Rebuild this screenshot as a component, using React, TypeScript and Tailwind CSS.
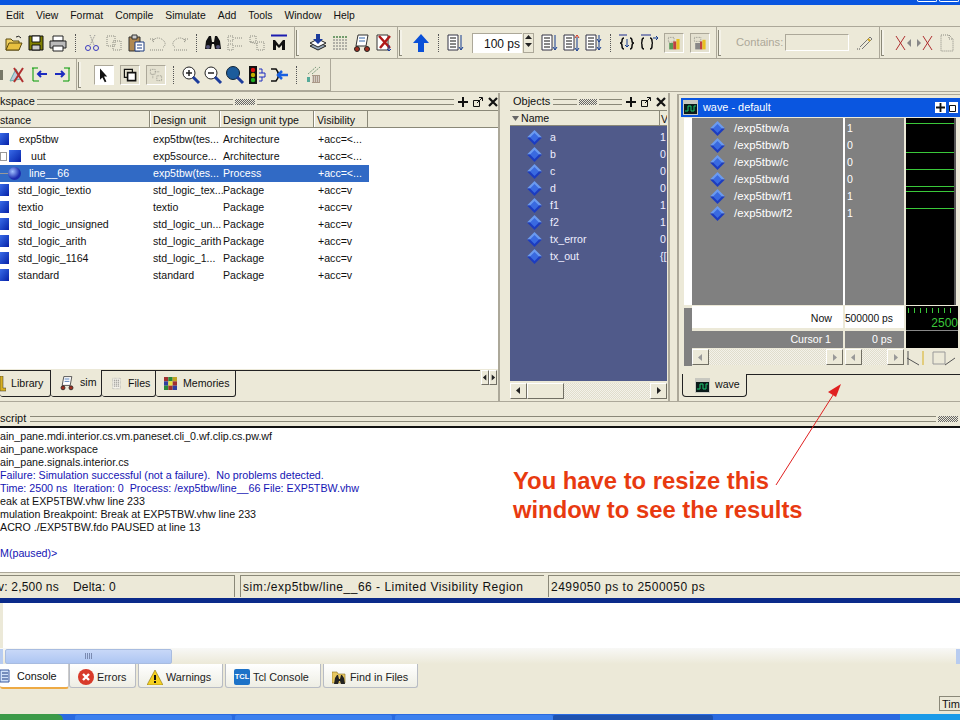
import React from "react";

const Ic = ({ children, s = 20 }: { children: React.ReactNode; s?: number }) => (
  <svg width={s} height={s} viewBox="0 0 20 20" className="block shrink-0">{children}</svg>
);
const dis = { fill: "none", stroke: "#8a8a80", strokeWidth: 1, strokeDasharray: "1 1" };

const icons: Record<string, React.ReactNode> = {
  open: <><path d="M2 6h5l2 2h6v9H2z" fill="#f0d060" stroke="#5a4a10" /><path d="M5 10h13l-3 7H2z" fill="#e8c040" stroke="#5a4a10" /><path d="M12 4q3-2 5 1" fill="none" stroke="#222" /></>,
  save: <><path d="M3 3h14v14H3z" fill="#808000" stroke="#111" /><path d="M6 3h8v6H6z" fill="#fff" stroke="#111" /><path d="M6 12h8v5H6z" fill="#ccc" stroke="#111" /></>,
  print: <><path d="M5 3h10v5H5z" fill="#fff" stroke="#222" /><path d="M2 8h16v7H2z" fill="#bbb" stroke="#222" /><path d="M5 13h10v5H5z" fill="#fff" stroke="#222" /></>,
  cut: <><path d="M8 2l4 10M13 2l-5 10" stroke="#888" fill="none" strokeDasharray="1 1" /><circle cx="6" cy="15" r="2.5" fill="none" stroke="#3a3ac0" /><circle cx="14" cy="15" r="2.5" fill="none" stroke="#3a3ac0" /></>,
  copy: <><path d="M3 3h8v10H3z" {...dis} /><path d="M9 8h8v9H9z" {...dis} /></>,
  paste: <><path d="M3 4h11v14H3z" fill="#b08850" stroke="#333" /><path d="M6 2h5v4H6z" fill="#ccc" stroke="#333" /><path d="M9 9h9v9H9z" fill="#fff" stroke="#1a3a80" /><path d="M11 12h5M11 15h5" stroke="#1a3a80" /></>,
  undo: <><path d="M4 8q6-6 12 0 3 4-2 7" {...dis} /><path d="M2 6l4 0-1 4M2 17h14" {...dis} /></>,
  redo: <><path d="M16 8q-6-6-12 0-3 4 2 7" {...dis} /><path d="M18 6l-4 0 1 4M4 17h14" {...dis} /></>,
  bino: <><path d="M3 8l3-5h2l1 6h2l1-6h2l3 5 1 8h-6l-1-5h-2l-1 5H2z" fill="#111" /><circle cx="5" cy="14" r="2" fill="#557" /><circle cx="15" cy="14" r="2" fill="#557" /></>,
  findA: <><path d="M3 3h5v5H3zM3 11h5v6H3zM10 5h7M10 13h7" {...dis} /></>,
  findB: <><path d="M3 3h6v6H3zM10 9h7v8h-7z" {...dis} /><path d="M3 9l7 2" {...dis} /></>,
  M: <><path d="M2 2.500h16" stroke="#1c1cb0" strokeWidth="2" /><path d="M4 17V7h2l4 5 4-5h2v10h-3v-5l-3 3-3-3v5z" fill="#111" /></>,
  stack: <><path d="M10 9l8 4-8 4-8-4z" fill="#9ab" stroke="#222" /><path d="M10 6l8 4-8 4-8-4z" fill="#fff" stroke="#222" /><path d="M8 1h4v5h3l-5 5-5-5h3z" fill="#1c3c9c" /></>,
  grid: <><path d="M3 4h14M3 7h14M3 10h14M3 13h14M3 16h14" stroke="#777" strokeDasharray="2 1" /><path d="M3 4h14" stroke="#383" strokeDasharray="2 1" /></>,
  cart: <><path d="M6 2h10l-2 11H4z" fill="#fff" stroke="#333" /><path d="M7 5h6M7 8h6" stroke="#36a" /><circle cx="5" cy="16" r="2.500" fill="#a03020" stroke="#222" /><circle cx="15" cy="16" r="2.500" fill="#a03020" stroke="#222" /></>,
  docx: <><path d="M3 2h11v15H3z" fill="#fff" stroke="#333" /><path d="M5 3l11 12M16 3L6 15" stroke="#b01818" strokeWidth="2.500" /><path d="M15 12v6m-2-2l2 2 2-2" stroke="#1c3c9c" fill="none" /></>,
  up: <path d="M10 1l8 9h-5v9H7v-9H2z" fill="#0a50d8" />,
  lst1: <><path d="M2 2h10v15H2z" fill="#fff" stroke="#334" /><path d="M4 5h6M4 8h6M4 11h6M4 14h6" stroke="#111" /><path d="M15 2v14M13 14l2 3 2-3" stroke="#123a90" fill="none" /></>,
  lst2: <><path d="M2 2h10v15H2z" fill="#fff" stroke="#334" /><path d="M4 5h6M4 8h6M4 11h6M4 14h6" stroke="#111" /><path d="M15 4v13" stroke="#123a90" /><path d="M13 5l2-3 2 3" stroke="#d03020" fill="none" /><path d="M13 15l2 3 2-3" stroke="#123a90" fill="none" /></>,
  lst3: <><path d="M2 2h10v15H2z" fill="#fff" stroke="#334" /><path d="M4 5h6M4 8h6M4 11h6M4 14h6" stroke="#111" /><path d="M15 2v15M13 6l2 3 2-3M13 14l2 3 2-3" stroke="#123a90" fill="none" /></>,
  braceA: <><path d="M2 2h8" stroke="#1c2c90" /><path d="M7 5q-2 0-2 3 0 2-2 2 2 0 2 3 0 3 2 3M13 5q2 0 2 3 0 2 2 2-2 0-2 3 0 3-2 3" fill="none" stroke="#111" strokeWidth="1.500" /><path d="M10 6v8M8 12l2 2 2-2" stroke="#123a90" fill="none" /></>,
  braceB: <><path d="M2 2h10" stroke="#1c2c90" /><path d="M5 5q-2 0-2 3 0 2-1 2 1 0 1 3 0 3 2 3M11 5q2 0 2 3 0 2 1 2-1 0-1 3 0 3-2 3" fill="none" stroke="#111" strokeWidth="1.500" /><path d="M14 5h5M17 3l2 2-2 2" stroke="#123a90" fill="none" /></>,
  chartA: <><path d="M3 3h7v6H3z" {...dis} /><path d="M4 10h5v8H4z" fill="#5a9a5a" /><path d="M9 8h4v10H9z" fill="#c04040" /><path d="M13 5h4v13h-4z" fill="#e8c020" /></>,
  chartB: <><path d="M3 3h8v5H3z" {...dis} /><path d="M4 10h6v8H4z" fill="#888" /><path d="M10 8h3v10h-3z" fill="#c04040" /><path d="M13 6h4v12h-4z" fill="#e8c020" /></>,
  xl: <><path d="M3 3l9 14M12 3L3 17" stroke="#b03030" /><path d="M18 6l-4 4 4 4z" fill="#888" /></>,
  xr: <><path d="M8 3l9 14M17 3L8 17" stroke="#b03030" /><path d="M2 6l4 4-4 4z" fill="#888" /></>,
  page: <path d="M4 2h8l4 4v12H4zM12 2v4h4" {...dis} />,
  files: <><path d="M4 2h12v16H4z" fill="#f4f2ea" stroke="#999" strokeDasharray="1 1" /><path d="M6 5h8M6 8h8M6 11h8M6 14h8" stroke="#555" strokeDasharray="2 1" /></>,
  pen: <><path d="M5 14L15 4l2 2L7 16" fill="none" stroke="#777" /><path d="M2 16h4" stroke="#555" strokeDasharray="1 1" /><path d="M13 6l2 2" stroke="#dcae20" strokeWidth="2" /></>,
  cart2: <><path d="M2 16L8 4l5 10z" fill="#bcd" stroke="#6aa" /><path d="M6 3l9 14M15 3L6 17" stroke="#b03030" strokeWidth="2" /></>,
  bl: <><path d="M2 3h6M3 3v13h6" fill="none" stroke="#090" /><path d="M17 9H8M11 6L8 9l3 3" fill="none" stroke="#1c2cc0" strokeWidth="2" /></>,
  br: <><path d="M18 3h-6M17 3v13h-6" fill="none" stroke="#090" /><path d="M3 9h9M9 6l3 3-3 3" fill="none" stroke="#1c2cc0" strokeWidth="2" /></>,
  arrow: <path d="M5 2v14l3-3 3 6 2-1-3-6h4z" fill="#111" />,
  box: <><path d="M3 3h10v10H3z" fill="none" stroke="#111" strokeWidth="1.500" /><path d="M7 7h10v10H7z" fill="#fff" stroke="#111" strokeWidth="2" /></>,
  box2: <path d="M3 3h6v6H3zM11 11h6v6h-6zM9 6h6M6 9v6" {...dis} />,
  zin: <><circle cx="8" cy="8" r="6" fill="#fff" stroke="#222" /><path d="M5 8h6M8 5v6" stroke="#222" strokeWidth="1.500" /><path d="M12 12l6 6" stroke="#1c3c9c" strokeWidth="3" /></>,
  zout: <><circle cx="8" cy="8" r="6" fill="#fff" stroke="#222" /><path d="M5 8h6" stroke="#222" strokeWidth="1.500" /><path d="M12 12l6 6" stroke="#1c3c9c" strokeWidth="3" /></>,
  zfull: <><circle cx="8" cy="8" r="6.500" fill="#1c5c9c" stroke="#123" /><path d="M12 12l6 6" stroke="#1c3c9c" strokeWidth="3" /></>,
  light: <><path d="M2 1h8v18H2z" fill="#111" /><circle cx="6" cy="5" r="2.200" fill="#e01010" /><circle cx="6" cy="10" r="2.200" fill="#c0b000" /><circle cx="6" cy="15" r="2.200" fill="#20b020" /><path d="M12 4h3v4h-3M12 16h3v-4h-3M15 8h3v4h-3" fill="none" stroke="#1c2cc0" /></>,
  arrowIn: <><path d="M2 4h5q5 6 0 12H2" fill="none" stroke="#111" strokeWidth="1.600" /><path d="M19 10H9M13 6l-4 4 4 4" fill="none" stroke="#1860e0" strokeWidth="2.500" /></>,
  multi: <><path d="M4 9l8-7M8 9l8-7" stroke="#7a9a7a" strokeDasharray="2 1" /><path d="M3 12h3v5H3z" fill="#5a9" /><path d="M8 10h8v8H8z" fill="#a98" /><path d="M8 12h8M8 14h8M8 16h8" stroke="#fff" strokeDasharray="1 1" /></>,
};

const Tool = ({ n, cls = "" }: { n: string; cls?: string }) => (
  <div className={`w-[22px] h-[22px] flex items-center justify-center shrink-0 ${cls}`}><Ic>{icons[n]}</Ic></div>
);
const Btn = ({ n, white = false }: { n: string; white?: boolean }) => (
  <div className={`w-[20px] h-[20px] flex items-center justify-center shrink-0 border border-t-[#aca899] border-l-[#aca899] border-r-white border-b-white ${white ? "bg-white" : "bg-[#e4e1d0]"}`}><Ic s={16}>{icons[n]}</Ic></div>
);
const Sep = ({ w = "w-[12px]" }: { w?: string }) => (
  <div className={`${w} h-[18px] shrink-0 flex justify-center`}><div className="w-px h-full border-l border-dotted border-[#555]" /></div>
);
const Handle = () => (
  <div className="w-[12px] h-[26px] shrink-0 pl-[1px]"><div className="w-[3px] h-full border-l border-b border-[#8a8878] bg-[#f4f2e8]" /></div>
);
const Group = ({ w, children }: { w: string; children: React.ReactNode }) => (
  <div className={`${w} h-full flex items-center shrink-0 border-r border-[#aca899]`}>{children}</div>
);

const Grip = () => <div className="flex-1 h-[6px] border-y border-[#8a8878] min-w-0" />;
const Dots = ({ w = "w-[20px]" }: { w?: string }) => (
  <div className={`${w} h-[6px] shrink-0 mx-[2px] bg-[repeating-conic-gradient(#666_0_25%,transparent_0_50%)] bg-[length:2px_2px]`} />
);
const WinBtns = () => (
  <div className="flex items-center gap-[5px] shrink-0 ml-[4px]">
    <svg width="10" height="10" viewBox="0 0 10 10"><path d="M4 0h2v4h4v2H6v4H4V6H0V4h4z" fill="#111" /></svg>
    <svg width="10" height="10" viewBox="0 0 10 10"><path d="M.5 3.500h6v6h-6z" fill="none" stroke="#111" /><path d="M4 6l5-5M6 .5h3.500V4" fill="none" stroke="#111" /></svg>
    <svg width="10" height="10" viewBox="0 0 10 10"><path d="M1 1l8 8M9 1l-8 8" stroke="#111" strokeWidth="2.200" /></svg>
  </div>
);
const Cube = () => <div className="w-[12px] h-[12px] shrink-0 bg-gradient-to-br from-[#3a6ae8] to-[#0a1ea8]" />;
const Diamond = () => (
  <svg width="15" height="15" viewBox="0 0 15 15" className="shrink-0">
    <path d="M7.500 0L15 7.500H0z" fill="#6a9af0" />
    <path d="M0 7.500h15L7.500 15z" fill="#1c3cc0" />
    <path d="M7.500 3l4.500 4.500L7.500 12 3 7.500z" fill="#3a6ae0" />
  </svg>
);
const WaveIcon = () => (
  <svg width="15" height="15" viewBox="0 0 15 15" className="shrink-0">
    <path d="M0 0h15v15H0z" fill="#c8c8c0" />
    <path d="M1 4h13v10H1z" fill="#0a1a1a" />
    <path d="M2 11h3V6h3v5h3V6h2" stroke="#1ac870" fill="none" />
  </svg>
);
const Arr = ({ d, c = "#222" }: { d: "l" | "r" | "u" | "d"; c?: string }) => (
  <svg width="7" height="7" viewBox="0 0 7 7">
    <path d={d === "l" ? "M5 0v7L1 3.500z" : d === "r" ? "M2 0v7l4-3.500z" : d === "u" ? "M0 5h7L3.500 1z" : "M0 2h7L3.500 6z"} fill={c} />
  </svg>
);
const SbBtn = ({ d, c }: { d: "l" | "r"; c?: string }) => (
  <div className="w-[17px] h-[16px] shrink-0 bg-[#ece9d8] border border-white border-r-[#716f64] border-b-[#716f64] flex items-center justify-center"><Arr d={d} c={c} /></div>
);
const Dither = "bg-[repeating-conic-gradient(#f4f2ea_0_25%,#e0ddcc_0_50%)] bg-[length:2px_2px]";

const tree = [
  ["exp5tbw", "exp5tbw(tes...", "Architecture", "+acc=<..."],
  ["uut", "exp5source...", "Architecture", "+acc=<..."],
  ["line__66", "exp5tbw(tes...", "Process", "+acc=<..."],
  ["std_logic_textio", "std_logic_tex...", "Package", "+acc=v"],
  ["textio", "textio", "Package", "+acc=v"],
  ["std_logic_unsigned", "std_logic_un...", "Package", "+acc=v"],
  ["std_logic_arith", "std_logic_arith", "Package", "+acc=v"],
  ["std_logic_1164", "std_logic_1...", "Package", "+acc=v"],
  ["standard", "standard", "Package", "+acc=v"],
];
const objs = [["a", "1"], ["b", "0"], ["c", "0"], ["d", "0"], ["f1", "1"], ["f2", "1"], ["tx_error", "0"], ["tx_out", "{["]];
const waves = [["/exp5tbw/a", "1"], ["/exp5tbw/b", "0"], ["/exp5tbw/c", "0"], ["/exp5tbw/d", "0"], ["/exp5tbw/f1", "1"], ["/exp5tbw/f2", "1"]];
const logLines: [string, string][] = [
  ["ain_pane.mdi.interior.cs.vm.paneset.cli_0.wf.clip.cs.pw.wf", "text-[#111]"],
  ["ain_pane.workspace", "text-[#111]"],
  ["ain_pane.signals.interior.cs", "text-[#111]"],
  ["Failure: Simulation successful (not a failure).  No problems detected.", "text-[#1414b4]"],
  ["Time: 2500 ns  Iteration: 0  Process: /exp5tbw/line__66 File: EXP5TBW.vhw", "text-[#1414b4]"],
  ["eak at EXP5TBW.vhw line 233", "text-[#111]"],
  ["mulation Breakpoint: Break at EXP5TBW.vhw line 233", "text-[#111]"],
  ["ACRO ./EXP5TBW.fdo PAUSED at line 13", "text-[#111]"],
  ["\u00a0", "text-[#111]"],
  ["M(paused)>", "text-[#1414b4]"],
];

const HeadCell = ({ w, children }: { w: string; children?: React.ReactNode }) => (
  <div className={`${w} h-full shrink-0 flex items-center pl-[2px] pt-[3px] border-r border-[#8a8878] border-l border-l-white overflow-hidden whitespace-nowrap`}>{children}</div>
);

const BotTab = ({ w, icon, label }: { w: string; icon: React.ReactNode; label: string }) => (
  <div className={`${w} h-[24px] shrink-0 flex items-center gap-[3px] pl-[8px] pt-[3px] rounded-b-[3px] border-x border-b border-[#b8bcc4] bg-gradient-to-b from-white to-[#eeeee4]`}>
    {icon}<span className="text-[#222]">{label}</span>
  </div>
);

export default function App() {
  return (
    <div className="w-[960px] h-[720px] relative overflow-hidden flex flex-col bg-[#ece9d8] text-[10.6px] text-[#111] font-['Liberation_Sans',Arial,sans-serif]">
      {/* title strip */}
      <div className="h-[5px] shrink-0 bg-[#0a56e0] flex justify-end items-start pr-[1px] gap-[2px]">
        <div className="w-[20px] h-[2px] border-x border-b border-white rounded-b-[2px]" />
        <div className="w-[20px] h-[2px] border-x border-b border-white rounded-b-[2px]" />
      </div>
      {/* menu */}
      <div className="h-[21px] shrink-0 flex items-center pl-[6px] gap-[12px] text-[10.4px]">
        {["Edit", "View", "Format", "Compile", "Simulate", "Add", "Tools", "Window", "Help"].map((m) => <span key={m}>{m}</span>)}
      </div>
      {/* toolbar 1 */}
      <div className="h-[33px] shrink-0 flex items-center border-y border-[#aca899]">
        <Group w="w-[295px]">
          <div className="w-[3px]" />
          <Tool n="open" /><Tool n="save" /><Tool n="print" /><Sep />
          <Tool n="cut" /><Tool n="copy" /><Tool n="paste" /><Tool n="undo" /><Tool n="redo" /><Sep w="w-[11px]" />
          <Tool n="bino" /><Tool n="findA" /><Tool n="findB" /><Tool n="M" />
        </Group>
        <Group w="w-[103px]">
          <Handle />
          <Tool n="stack" /><Tool n="grid" /><Tool n="cart" /><Tool n="docx" />
        </Group>
        <Group w="w-[319px]">
          <Handle />
          <Tool n="up" /><Sep w="w-[13px]" />
          <Tool n="lst1" />
          <div className="w-[50px] h-[20px] ml-[5px] bg-white shrink-0 text-right pr-[2px] text-[12px] leading-[20px] border-t border-l border-[#aca899]">100 ps</div>
          <div className="w-[11px] h-[20px] ml-[1px] shrink-0 flex flex-col items-center border border-[#aca899]"><Arr d="u" /><Arr d="d" /></div>
          <div className="w-[5px]" />
          <Tool n="lst1" /><Tool n="lst2" /><Tool n="lst3" /><Sep w="w-[11px]" />
          <Tool n="braceA" /><Tool n="braceB" />
          <div className="w-[4px]" />
          <Btn n="chartA" /><div className="w-[6px]" /><Btn n="chartB" />
        </Group>
        <Group w="w-[163px]">
          <Handle />
          <span className="text-[#aca899] text-[11.2px] ml-[7px] w-[49px]">Contains:</span>
          <div className="w-[64px] h-[17px] border border-[#aca899] border-r-white border-b-white shrink-0" />
          <Tool n="pen" cls="ml-[5px]" />
        </Group>
        <Handle />
        <div className="flex items-center"><Tool n="xl" /><Tool n="xr" /><Tool n="page" /></div>
      </div>
      {/* toolbar 2 */}
      <div className="h-[32px] shrink-0 flex items-center">
        <div className="w-[331px] h-full flex items-center border-b border-r border-[#aca899] shrink-0">
          <div className="w-[77px] h-full flex items-center border-r border-[#aca899] shrink-0 overflow-hidden">
            <div className="w-[3px] h-[10px] bg-[#776] shrink-0" /><div className="w-[4px]" />
            <Tool n="cart2" /><Tool n="bl" /><Tool n="br" />
          </div>
          <Handle />
          <div className="w-[5px]" />
          <Btn n="arrow" white /><div className="w-[6px]" /><Btn n="box" /><div className="w-[6px]" /><Btn n="box2" />
          <Sep w="w-[14px]" />
          <Tool n="zin" /><Tool n="zout" /><Tool n="zfull" /><Tool n="light" /><Tool n="arrowIn" /><Sep w="w-[13px]" />
          <Tool n="multi" />
        </div>
      </div>
      {/* panes */}
      <div className="h-[310px] shrink-0 flex border-t border-[#aca899] pt-[1px]">
        {/* workspace */}
        <div className="w-[500px] shrink-0 flex flex-col border-r-2 border-[#aca899]">
          <div className="h-[17px] shrink-0 flex items-center text-[11px]">
            <span className="mr-[2px]">kspace</span><Grip /><Dots /><Grip /><WinBtns />
          </div>
          <div className="h-[18px] shrink-0 flex border-y border-[#8a8878]">
            <div className="w-[150px] h-full shrink-0 flex items-center pt-[3px] border-r border-[#8a8878]">stance</div>
            <HeadCell w="w-[70px]">Design unit</HeadCell>
            <HeadCell w="w-[94px]">Design unit type</HeadCell>
            <HeadCell w="w-[54px]">Visibility</HeadCell>
          </div>
          <div className="h-[241px] shrink-0 bg-white pt-[3px]">
            {tree.map((r, i) => {
              const sel = i === 2;
              return (
                <div key={r[0]} className={`h-[17px] w-[369px] flex items-center whitespace-nowrap overflow-hidden ${sel ? "bg-[#316ac5] text-white" : ""}`}>
                  <div className="w-[150px] shrink-0 flex items-center overflow-hidden">
                    {i === 1 ? (
                      <><div className="w-[7px] h-[9px] border border-[#999] bg-white shrink-0" /><div className="w-[2px]" /><Cube /><span className="ml-[10px]">{r[0]}</span></>
                    ) : sel ? (
                      <><div className="w-[8px] h-px bg-[#999] shrink-0" /><div className="w-[13px] h-[13px] rounded-full shrink-0 bg-[radial-gradient(circle_at_35%_35%,#a0c0ff,#1c2cb0_60%)]" /><span className="ml-[8px]">{r[0]}</span></>
                    ) : (
                      <><div className="w-[9px] h-[12px] shrink-0 bg-gradient-to-br from-[#3a6ae8] to-[#0a1ea8]" /><span className={i === 0 ? "ml-[10px]" : "ml-[9px]"}>{r[0]}</span></>
                    )}
                  </div>
                  <div className="w-[71px] pl-[3px] shrink-0">{r[1]}</div>
                  <div className="w-[95px] pl-[2px] shrink-0">{r[2]}</div>
                  <div className="pl-[2px]">{r[3]}</div>
                </div>
              );
            })}
          </div>
          <div className="flex-1 flex items-start pt-[1px] relative">
            <div className="flex h-[27px] items-stretch">
              <div className="w-[51px] shrink-0 flex items-center gap-[5px] border-r border-b border-t border-[#222] rounded-b-[3px]">
                <svg width="6" height="16" viewBox="0 0 6 16"><path d="M0 0h3v12h3v3H0z" fill="#d8b020" stroke="#333" strokeWidth=".5" /></svg><span>Library</span>
              </div>
              <div className="w-[51px] shrink-0 flex items-center gap-[5px] pl-[8px] border-r border-b border-[#222] rounded-b-[3px]">
                <Ic s={16}>{icons.cart}</Ic><span>sim</span>
              </div>
              <div className="w-[54px] shrink-0 flex items-center gap-[5px] pl-[8px] border-r border-b border-t border-[#222] rounded-b-[3px]">
                <Ic s={13}>{icons.files}</Ic><span>Files</span>
              </div>
              <div className="w-[80px] shrink-0 flex items-center gap-[6px] pl-[8px] border-r border-b border-t border-[#222] rounded-b-[3px]">
                <svg width="13" height="13" viewBox="0 0 12 12"><path d="M0 0h4v4H0z" fill="#a03030" /><path d="M4 0h4v4H4z" fill="#2a8a3a" /><path d="M8 0h4v4H8z" fill="#c0a020" /><path d="M0 4h4v4H0z" fill="#3040a0" /><path d="M4 4h4v4H4z" fill="#e8e040" /><path d="M8 4h4v4H8z" fill="#a03030" /><path d="M0 8h4v4H0z" fill="#2a8a3a" /><path d="M4 8h4v4H4z" fill="#a03030" /><path d="M8 8h4v4H8z" fill="#3040a0" /></svg>
                <span>Memories</span>
              </div>
            </div>
            <div className="flex-1 h-px bg-[#222] mr-[18px]" />
            <div className="flex items-center absolute right-[1px] top-[1px]">
              <div className="w-[8px] h-[15px] bg-[#ece9d8] border border-white border-r-[#716f64] border-b-[#716f64] flex items-center justify-center"><Arr d="l" /></div>
              <div className="w-[8px] h-[15px] bg-[#ece9d8] border border-white border-r-[#716f64] border-b-[#716f64] flex items-center justify-center"><Arr d="r" /></div>
            </div>
          </div>
        </div>
        <div className="w-[8px] shrink-0" />
        {/* objects */}
        <div className="w-[162px] shrink-0 flex flex-col border-r-2 border-[#aca899] pr-[1px]">
          <div className="h-[17px] shrink-0 flex items-center text-[11px] pl-[5px] pr-[1px]">
            <span className="mr-[3px]">Objects</span><Grip /><Dots w="w-[18px]" /><Grip /><WinBtns />
          </div>
          <div className="h-[16px] shrink-0 flex ml-[2px] border-y border-[#8a8878] overflow-hidden">
            <div className="w-[150px] h-full shrink-0 flex items-center pt-[1px] border-r border-[#8a8878] gap-[2px] pl-[2px]">
              <svg width="7" height="7" viewBox="0 0 7 7"><path d="M0 1h7L3.500 6z" fill="#666" /></svg>Name
            </div>
            <div className="pl-[1px] pt-[1px]">V</div>
          </div>
          <div className="h-[255px] shrink-0 ml-[2px] bg-[#505a8a] text-[#eef] pt-[3px]">
            {objs.map(([n, v]) => (
              <div key={n} className="h-[17px] flex items-center overflow-hidden whitespace-nowrap">
                <div className="ml-[17px] w-[22px] shrink-0"><Diamond /></div>
                <span className="w-[111px] shrink-0 pl-[1px]">{n}</span>
                <span>{v}</span>
              </div>
            ))}
          </div>
          <div className="h-[17px] shrink-0 ml-[2px] flex items-center mt-[1px]">
            <SbBtn d="l" />
            <div className="w-[37px] h-[16px] bg-[#ece9d8] border border-white border-r-[#716f64] border-b-[#716f64] shrink-0" />
            <div className={`flex-1 h-[16px] ${Dither}`} />
            <SbBtn d="r" />
          </div>
        </div>
        <div className="w-[7px] shrink-0" />
        {/* wave */}
        <div className="flex-1 min-w-0 flex flex-col border-l-2 border-t border-[#aca899] pl-[2px] pt-[3px] mt-[1px]">
          <div className="h-[19px] shrink-0 bg-[#0a56e0] flex items-center text-white text-[10.9px] pl-[2px] pr-[2px] gap-[5px]">
            <WaveIcon /><span className="flex-1">wave - default</span>
            <div className="flex gap-[3px] items-center">
              <div className="w-[11px] h-[11px] bg-white flex items-center justify-center"><svg width="9" height="9" viewBox="0 0 10 10"><path d="M4 0h2v4h4v2H6v4H4V6H0V4h4z" fill="#111" /></svg></div>
              <div className="w-[9px] h-[11px] bg-white overflow-hidden"><svg width="10" height="10" viewBox="0 0 10 10"><path d="M.5 3.500h6v6h-6z" fill="none" stroke="#111" /></svg></div>
            </div>
          </div>
          <div className="h-[248px] shrink-0 flex flex-col mt-[1px] ml-[3px]">
            <div className="h-[187px] flex shrink-0">
              <div className="w-[8px] bg-white shrink-0" />
              <div className="w-[151px] shrink-0 bg-[#808080] text-white pt-[2px] text-[11.4px]">
                {waves.map(([n]) => (
                  <div key={n} className="h-[17px] flex items-center">
                    <div className="ml-[18px] w-[24px] shrink-0"><Diamond /></div><span>{n}</span>
                  </div>
                ))}
              </div>
              <div className="w-[2px] bg-white shrink-0" />
              <div className="w-[59px] shrink-0 bg-[#808080] text-white pt-[2px]">
                {waves.map(([n, v]) => <div key={n} className="h-[17px] flex items-center pl-[2px]">{v}</div>)}
              </div>
              <div className="w-[2px] bg-[#ece9d8] shrink-0" />
              <div className="flex-1 bg-black border-r-2 border-[#555] mr-[4px] flex flex-col">
                <div className="h-[6px] border-b border-[#3ac83a] shrink-0" />
                <div className="h-[29px] border-b border-[#3ac83a] shrink-0" />
                <div className="h-[17px] border-b border-[#3ac83a] shrink-0" />
                <div className="h-[17px] border-b border-[#3ac83a] shrink-0" />
                <div className="h-[5px] border-b border-[#3ac83a] shrink-0" />
                <div className="h-[17px] border-b border-[#3ac83a] shrink-0" />
              </div>
            </div>
            <div className="h-[25px] flex shrink-0 mt-px">
              <div className="w-[8px] bg-[#808080] shrink-0 mt-[2px]" />
              <div className="w-[151px] shrink-0 bg-white border-b-[3px] border-[#ece9d8] flex items-center justify-end pr-[11px] pt-[3px]">Now</div>
              <div className="w-[2px] bg-[#ece9d8] shrink-0" />
              <div className="w-[59px] shrink-0 bg-white border-b-[3px] border-[#ece9d8] flex items-center justify-end pr-[11px] pt-[3px] whitespace-nowrap text-[10.3px]">500000 ps</div>
              <div className="w-[2px] bg-[#ece9d8] shrink-0" />
              <div className="flex-1 bg-black mr-[2px] border-b border-[#888] overflow-hidden text-right text-[#3ac83a] text-[12px] leading-[14px]">
                <div className="h-[5px] mt-[2px] mx-[2px] bg-[repeating-linear-gradient(90deg,#3ac83a_0,#3ac83a_1px,transparent_1px,transparent_6px)]" />
                <div className="mt-[3px] whitespace-nowrap">2500</div>
              </div>
            </div>
            <div className="h-[17px] flex shrink-0 text-white">
              <div className="w-[159px] shrink-0 bg-[#808080] flex items-center justify-end pr-[12px]">Cursor 1</div>
              <div className="w-[2px] bg-[#ece9d8] shrink-0" />
              <div className="w-[59px] shrink-0 bg-[#808080] flex items-center justify-end pr-[12px]">0 ps</div>
              <div className="w-[2px] bg-[#ece9d8] shrink-0" />
              <div className="flex-1 bg-black mr-[2px]" />
            </div>
            <div className="h-[18px] flex shrink-0">
              <div className="w-[8px] bg-[#808080] shrink-0" />
              <div className="w-[151px] shrink-0 flex pt-[1px]"><SbBtn d="l" c="#999" /><div className={`flex-1 h-[16px] ${Dither}`} /><SbBtn d="r" c="#999" /></div>
              <div className="w-[2px] bg-[#ece9d8] shrink-0" />
              <div className="w-[59px] shrink-0 flex pt-[1px]"><SbBtn d="l" c="#999" /><div className={`flex-1 h-[16px] ${Dither}`} /><SbBtn d="r" c="#999" /></div>
              <div className="w-[2px] bg-[#ece9d8] shrink-0" />
              <div className="flex-1 mr-[2px] flex items-center pt-[1px] overflow-hidden">
                <svg width="50" height="16" viewBox="0 0 50 16" className="shrink-0"><path d="M1 8l12 7M2 1v14" stroke="#555" fill="none" /><path d="M17 1v14" stroke="#d8b020" /><path d="M27 2h12v12H27z" fill="#ece9d8" stroke="#999" /><path d="M49 8l-10 7" stroke="#555" /></svg>
              </div>
            </div>
          </div>
          <div className="h-[23px] shrink-0 flex mt-[8px] ml-[1px] items-start">
            <div className="w-[65px] h-[23px] shrink-0 flex items-center gap-[5px] pl-[12px] border-x border-b border-[#222] rounded-b-[4px]"><WaveIcon /><span>wave</span></div>
            <div className="flex-1 h-px bg-[#222]" />
          </div>
        </div>
      </div>
      {/* transcript */}
      <div className="h-[27px] shrink-0 flex flex-col justify-end border-t border-[#aca899]">
        <div className="h-[17px] flex items-center text-[11px] border-b-2 border-[#111]">
          <span className="mr-[4px]">script</span><Grip /><Dots />
        </div>
      </div>
      <div className="h-[144px] shrink-0 bg-white pt-[2px] leading-[13px] whitespace-pre">
        {logLines.map(([t, c], i) => <div key={i} className={`h-[13px] text-[10.7px] ${c}`}>{t}</div>)}
      </div>
      {/* status */}
      <div className="h-[26px] shrink-0 flex items-stretch border-t border-[#aca899] pt-[2px] pb-[1px] text-[12px] tracking-[0.5px] overflow-hidden">
        <div className="w-[235px] shrink-0 border-t border-r border-[#8a8878] flex items-center pt-[1px] overflow-hidden whitespace-pre tracking-[0.2px]">
          <span className="-ml-[2px]">v: 2,500 ns</span><span className="ml-[14px]">Delta: 0</span>
        </div>
        <div className="w-[5px]" />
        <div className="w-[304px] shrink-0 border-t border-l border-[#8a8878] flex items-center pl-[2px] pt-[1px]">sim:/exp5tbw/line__66 - Limited Visibility Region</div>
        <div className="w-[4px]" />
        <div className="flex-1 border-t border-l border-[#8a8878] flex items-center pl-[2px] pt-[1px]">2499050 ps to 2500050 ps</div>
      </div>
      {/* second window */}
      <div className="h-[5px] shrink-0 bg-[#0a2a8a]" />
      <div className="h-[45px] shrink-0 bg-white flex"><div className="w-[3px] bg-[#ece9d8]" /></div>
      <div className="h-[16px] shrink-0 flex items-center bg-gradient-to-b from-[#f8f8f6] to-[#ece9d8] justify-between">
        <div className="flex items-center">
          <div className="w-[3px] h-[15px] bg-[#b8ccf0]" />
          <div className="w-[167px] h-[15px] ml-[2px] rounded-[2px] bg-gradient-to-b from-[#c8d8f8] to-[#aec6f2] border border-[#a8bce0] flex items-center justify-center">
            <div className="w-[8px] h-[6px] bg-[repeating-linear-gradient(90deg,#7a8ab0_0,#7a8ab0_1px,transparent_1px,transparent_2px)]" />
          </div>
        </div>
        <div className="w-[4px] h-[15px] bg-[#b8ccf0]" />
      </div>
      <div className="h-[25px] shrink-0 flex items-start text-[10.8px]">
        <div className="w-[69px] h-[25px] shrink-0 flex items-center gap-[7px] pt-[1px] bg-white rounded-b-[3px] border-b-[2px] border-[#eeaa44] border-r border-r-[#ccc]">
          <svg width="10" height="14" viewBox="0 0 10 14" className="shrink-0"><path d="M0 1h9v12H0z" fill="#cfe0f8" stroke="#3a5aa0" /><path d="M2 4h6M2 7h6M2 10h6" stroke="#1a3a80" /></svg>
          <span>Console</span>
        </div>
        <BotTab w="w-[67px]" label="Errors" icon={<svg width="16" height="16" viewBox="0 0 16 16" className="shrink-0"><circle cx="8" cy="8" r="8" fill="#d83a2a" /><path d="M5 5l6 6M11 5l-6 6" stroke="#fff" strokeWidth="2.400" /></svg>} />
        <div className="w-[2px]" />
        <BotTab w="w-[85px]" label="Warnings" icon={<svg width="16" height="15" viewBox="0 0 16 15" className="shrink-0"><path d="M8 0l8 15H0z" fill="#f4d020" stroke="#8a7010" strokeWidth=".6" /><path d="M7 5h2v5H7zM7 11h2v2H7z" fill="#111" /></svg>} />
        <div className="w-[2px]" />
        <BotTab w="w-[96px]" label="Tcl Console" icon={<div className="w-[16px] h-[16px] shrink-0 rounded-[2px] bg-[#1c72c8] text-white text-[7.5px] leading-[16px] font-bold text-center">TCL</div>} />
        <div className="w-[2px]" />
        <BotTab w="w-[95px]" label="Find in Files" icon={<svg width="15" height="15" viewBox="0 0 15 15" className="shrink-0"><path d="M0 2h5l1 2h7v9H0z" fill="#e8c860" stroke="#8a7020" strokeWidth=".6" /><path d="M3 8l2-3h1l1 4h1l1-4h1l2 3 1 6h-4l-1-3H7l-1 3H2z" fill="#222" /></svg>} />
      </div>
      <div className="flex-1 flex justify-end items-start pt-[7px]">
        <div className="w-[21px] h-[15px] border border-[#8a8878] border-r-0 pl-[2px] leading-[14px] text-[11px]">Tim</div>
      </div>
      <div className="h-[6px] shrink-0 bg-[#2a6ae0] flex">
        <div className="w-[63px] bg-[#3c9a48] rounded-tr-[6px]" />
        <div className="w-[12px]" />
        <div className="w-[157px] bg-[#3c80ee] mt-[1px] rounded-t-[2px]" />
        <div className="w-[3px]" />
        <div className="w-[157px] bg-[#3c80ee] mt-[1px] rounded-t-[2px]" />
        <div className="w-[3px]" />
        <div className="w-[158px] bg-[#3c80ee] mt-[1px] rounded-t-[2px]" />
        <div className="w-[160px] bg-[#1e52b0] mt-[1px] rounded-t-[2px]" />
        <div className="w-[187px]" />
        <div className="flex-1 bg-[#1a9ae8]" />
      </div>
      {/* annotation */}
      <div className="absolute left-[513px] top-[466px] text-[#e83a10] font-bold text-[23.8px] leading-[29px] whitespace-nowrap">
        <div>You have to resize this</div>
        <div>window to see the results</div>
      </div>
      <svg className="absolute left-[770px] top-[380px]" width="80" height="110" viewBox="0 0 80 110">
        <path d="M6 105L65 12" stroke="#e02020" strokeWidth="1" />
        <path d="M71 4L58 12l8 5z" fill="#e02020" />
      </svg>
    </div>
  );
}
